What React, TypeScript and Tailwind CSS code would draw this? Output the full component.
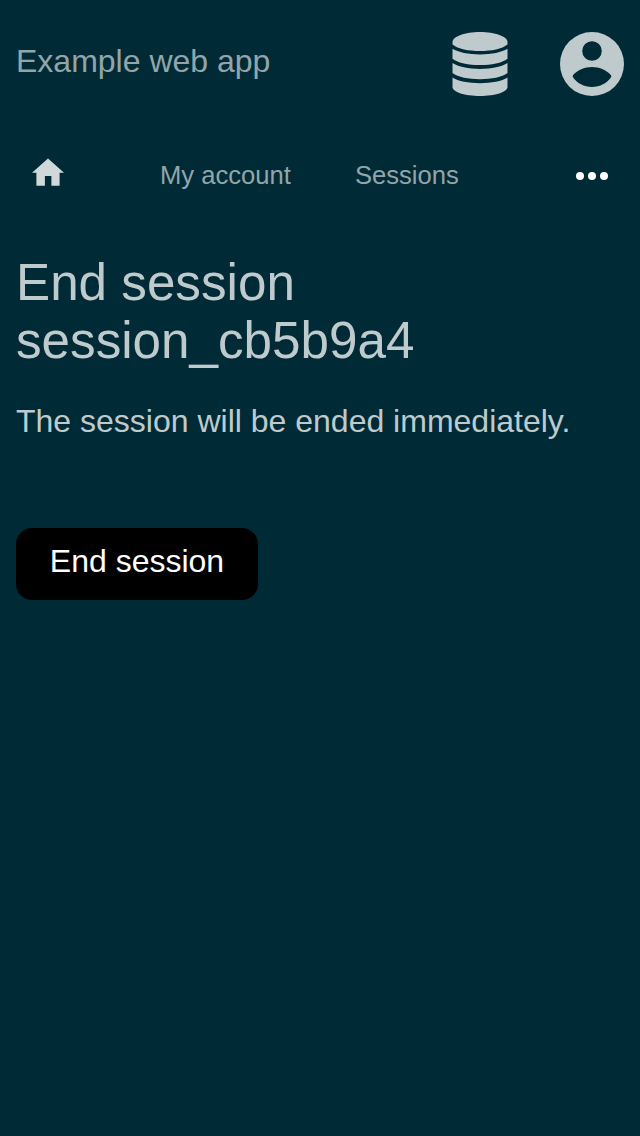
function Database() {
  return (
    <svg viewBox="0 0 56 64" className="h-16 w-14" fill="currentColor">
      <path d="M28 0C13 0 .5 4.500 .5 10V12.500C6 17 16.500 19 28 19s22-2 27.500-6.500V10C55.500 4.500 43 0 28 0Z" />
      <path d="M.5 16.700C6 20.200 16.500 22.400 28 22.400s22-2.200 27.500-5.700V26.700C50 31 39.500 33 28 33S6 31 .5 26.700Z" />
      <path d="M.5 31C6 34.800 16.500 36.900 28 36.900s22-2.100 27.500-5.900V41.100C50 45.300 39.500 47.300 28 47.300S6 45.300 .5 41.100Z" />
      <path d="M.5 45.500C6 49.200 16.500 51.200 28 51.200s22-2 27.500-5.700V55C55.500 60 43 64 28 64S.5 60 .5 55Z" />
    </svg>
  );
}

function Account() {
  return (
    <svg viewBox="0 0 64 64" className="size-16" fill="currentColor" fillRule="evenodd">
      <path d="M32 0a32 32 0 1 0 0 64a32 32 0 1 0 0-64ZM32 9.200a9.800 9.800 0 1 1 0 19.600a9.800 9.800 0 1 1 0-19.600ZM12.800 43.600C17 38 24.500 35 32 35s15 3 19.200 8.600V45C47 51.300 40 55 32 55s-15-3.700-19.200-10Z" />
    </svg>
  );
}

function Home() {
  return (
    <svg viewBox="0 0 32 28" className="h-7 w-8 text-[#d0d8da]" fill="currentColor">
      <path d="M16 .4L32 14.700H27.600V27.700H19.400V18H12.900V27.700H4.400V14.700H0Z" />
    </svg>
  );
}

function More() {
  return (
    <svg viewBox="0 0 32 8" className="h-2 w-8 text-white" fill="currentColor">
      <circle cx="4" cy="4" r="4" />
      <circle cx="16" cy="4" r="4" />
      <circle cx="28" cy="4" r="4" />
    </svg>
  );
}

export default function App() {
  return (
    <div className="min-h-screen bg-[#002b36] font-['Liberation_Sans',sans-serif] text-[32px] text-[#bfcacd]">
      <header className="flex h-32 items-center justify-between px-4">
        <span className="-mt-1.5 leading-9 text-[#93a5a9]">Example web app</span>
        <div className="flex items-center gap-[52px]">
          <Database />
          <Account />
        </div>
      </header>
      <nav className="flex h-24 items-center px-8 text-[25.6px] text-[#93a5a9]">
        <div className="-mt-2"><Home /></div>
        <a className="-mt-0.5 ml-24">My account</a>
        <a className="-mt-0.5 ml-16">Sessions</a>
        <div className="ml-auto"><More /></div>
      </nav>
      <main className="px-4 pt-[30px]">
        <h1 className="text-[51.2px] leading-[58px]">End session<br />session_cb5b9a4</h1>
        <p className="mt-[33px] leading-9">The session will be ended immediately.</p>
        <button className="mt-[89px] h-[72px] w-[242px] rounded-2xl bg-black pb-1.5 text-white">End session</button>
      </main>
    </div>
  );
}
